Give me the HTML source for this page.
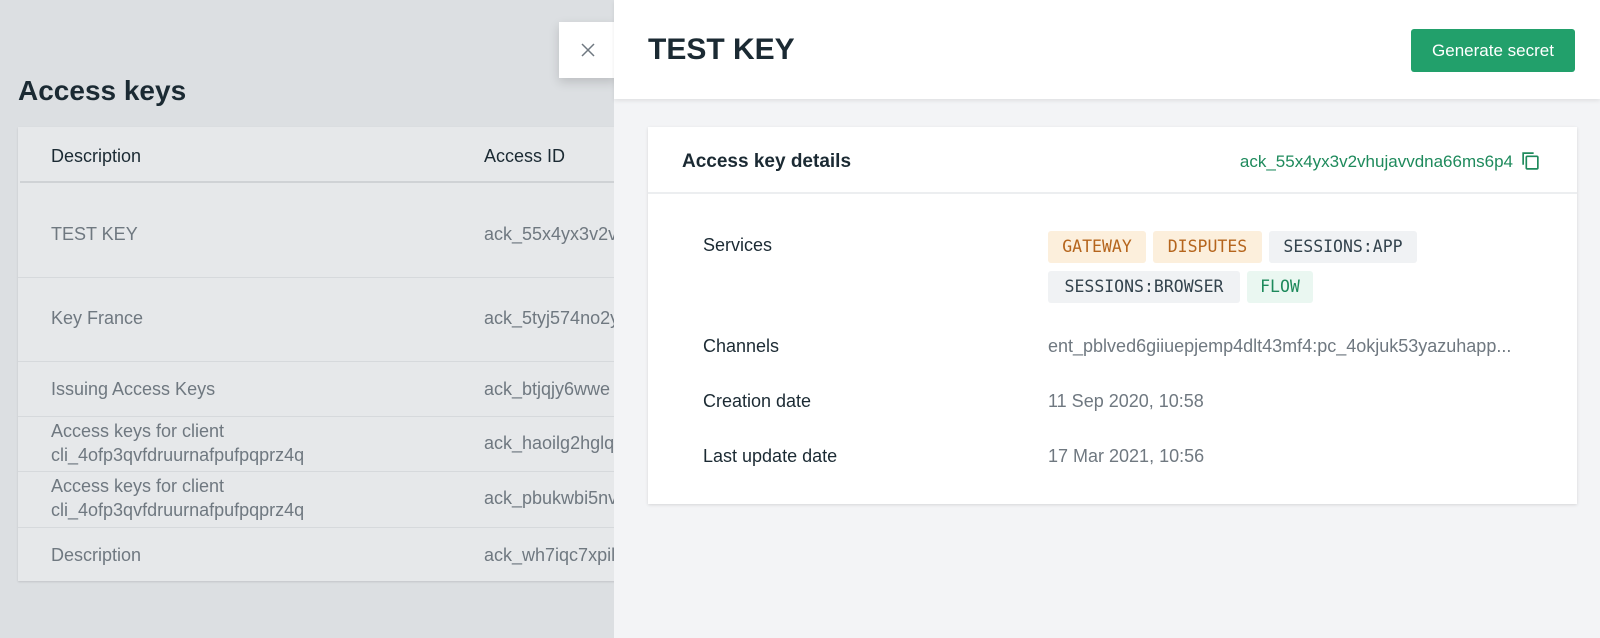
<!DOCTYPE html>
<html><head><meta charset="utf-8"><style>
*{margin:0;padding:0;box-sizing:border-box}
body{width:1600px;height:638px;overflow:hidden;background:#dcdfe2;font-family:"Liberation Sans",sans-serif;position:relative}
.abs{position:absolute;white-space:nowrap}
h1{position:absolute;left:18px;top:73px;font-size:28px;line-height:36px;font-weight:bold;color:#1b2a33}
.tbl{left:18px;top:127px;width:600px;height:454px;background:#e6e8ea;box-shadow:0 1px 2px rgba(0,0,0,.12)}
.th{font-size:18px;line-height:24px;color:#1b2a33}
.td{font-size:18px;line-height:24px;color:#6f7880}
.sep{position:absolute;left:18px;width:600px;height:1px;background:#d6d9dc}
.close{left:559px;top:22px;width:58px;height:56px;background:#fff;box-shadow:0 4px 10px rgba(0,0,0,.15)}
.panel{left:614px;top:0;width:986px;height:638px;background:#f3f4f6}
.hdr{left:614px;top:0;width:986px;height:99px;background:#fff;box-shadow:0 2px 4px rgba(0,0,0,.08)}
.btn{left:1411px;top:29px;width:164px;height:43px;background:#22a06b;border-radius:3px;color:#fff;font-size:17px;text-align:center;line-height:43px}
.card{left:648px;top:127px;width:929px;height:377px;background:#fff;box-shadow:0 1px 3px rgba(0,0,0,.12)}
.lbl{font-size:18px;line-height:24px;color:#1b2a33}
.val{font-size:18px;line-height:24px;color:#6f7880}
.tag{position:absolute;height:32px;line-height:32px;font-family:"DejaVu Sans Mono","Liberation Mono",monospace;font-size:16.5px;border-radius:3px;text-align:center}
.o{background:#fcefdc;color:#b5651d}.g{background:#f0f2f4;color:#33434d}.gr{background:#eaf7f1;color:#1e8a5c}
</style></head><body>
<h1>Access keys</h1>
<div class="abs tbl"></div>
<div class="abs" style="left:20px;top:181px;width:598px;height:2px;background:#cfd2d5"></div>
<div class="abs th" style="left:51px;top:144px">Description</div>
<div class="abs th" style="left:484px;top:144px">Access ID</div>
<div class="sep" style="top:277px"></div><div class="sep" style="top:361px"></div><div class="sep" style="top:416px"></div><div class="sep" style="top:471px"></div><div class="sep" style="top:527px"></div>
<div class="abs td" style="left:51px;top:222px">TEST KEY</div><div class="abs td" style="left:484px;top:222px">ack_55x4yx3v2vhujav</div>
<div class="abs td" style="left:51px;top:306px">Key France</div><div class="abs td" style="left:484px;top:306px">ack_5tyj574no2y</div>
<div class="abs td" style="left:51px;top:377px">Issuing Access Keys</div><div class="abs td" style="left:484px;top:377px">ack_btjqjy6wwe</div>
<div class="abs td" style="left:51px;top:419px">Access keys for client<br>cli_4ofp3qvfdruurnafpufpqprz4q</div><div class="abs td" style="left:484px;top:431px">ack_haoilg2hglq</div>
<div class="abs td" style="left:51px;top:474px">Access keys for client<br>cli_4ofp3qvfdruurnafpufpqprz4q</div><div class="abs td" style="left:484px;top:486px">ack_pbukwbi5nv</div>
<div class="abs td" style="left:51px;top:543px">Description</div><div class="abs td" style="left:484px;top:543px">ack_wh7iqc7xpil</div>
<div class="abs panel"></div>
<div class="abs close"><svg class="abs" style="left:22px;top:21px" width="14" height="14" viewBox="0 0 14 14"><path d="M1 1L13 13M13 1L1 13" stroke="#6f7880" stroke-width="1.5"/></svg></div>
<div class="abs hdr"></div>
<div class="abs" style="left:648px;top:32px;font-size:30px;line-height:36px;font-weight:bold;color:#1b2a33">TEST KEY</div>
<div class="abs btn">Generate secret</div>
<div class="abs card"></div>
<div class="abs" style="left:648px;top:192px;width:929px;height:2px;background:#eceef0"></div>
<div class="abs" style="left:682px;top:150px;font-size:19px;line-height:24px;font-weight:bold;color:#1b2a33">Access key details</div>
<div class="abs" style="right:87px;top:150px;font-size:17px;line-height:24px;color:#1e8a5c">ack_55x4yx3v2vhujavvdna66ms6p4</div>
<svg class="abs" style="left:1520px;top:150px" width="21" height="21" viewBox="0 0 20 20" fill="none" stroke="#1e8a5c" stroke-width="1.6"><path d="M3 14V3h10"/><rect x="6" y="6" width="11" height="12" rx="1"/></svg>
<div class="abs lbl" style="left:703px;top:233px">Services</div>
<div class="tag o" style="left:1048px;top:231px;width:98px">GATEWAY</div>
<div class="tag o" style="left:1153px;top:231px;width:109px">DISPUTES</div>
<div class="tag g" style="left:1269px;top:231px;width:148px">SESSIONS:APP</div>
<div class="tag g" style="left:1048px;top:271px;width:192px">SESSIONS:BROWSER</div>
<div class="tag gr" style="left:1247px;top:271px;width:66px">FLOW</div>
<div class="abs lbl" style="left:703px;top:334px">Channels</div>
<div class="abs val" style="left:1048px;top:334px">ent_pblved6giiuepjemp4dlt43mf4:pc_4okjuk53yazuhapp...</div>
<div class="abs lbl" style="left:703px;top:389px">Creation date</div>
<div class="abs val" style="left:1048px;top:389px">11 Sep 2020, 10:58</div>
<div class="abs lbl" style="left:703px;top:444px">Last update date</div>
<div class="abs val" style="left:1048px;top:444px">17 Mar 2021, 10:56</div>
</body></html>
